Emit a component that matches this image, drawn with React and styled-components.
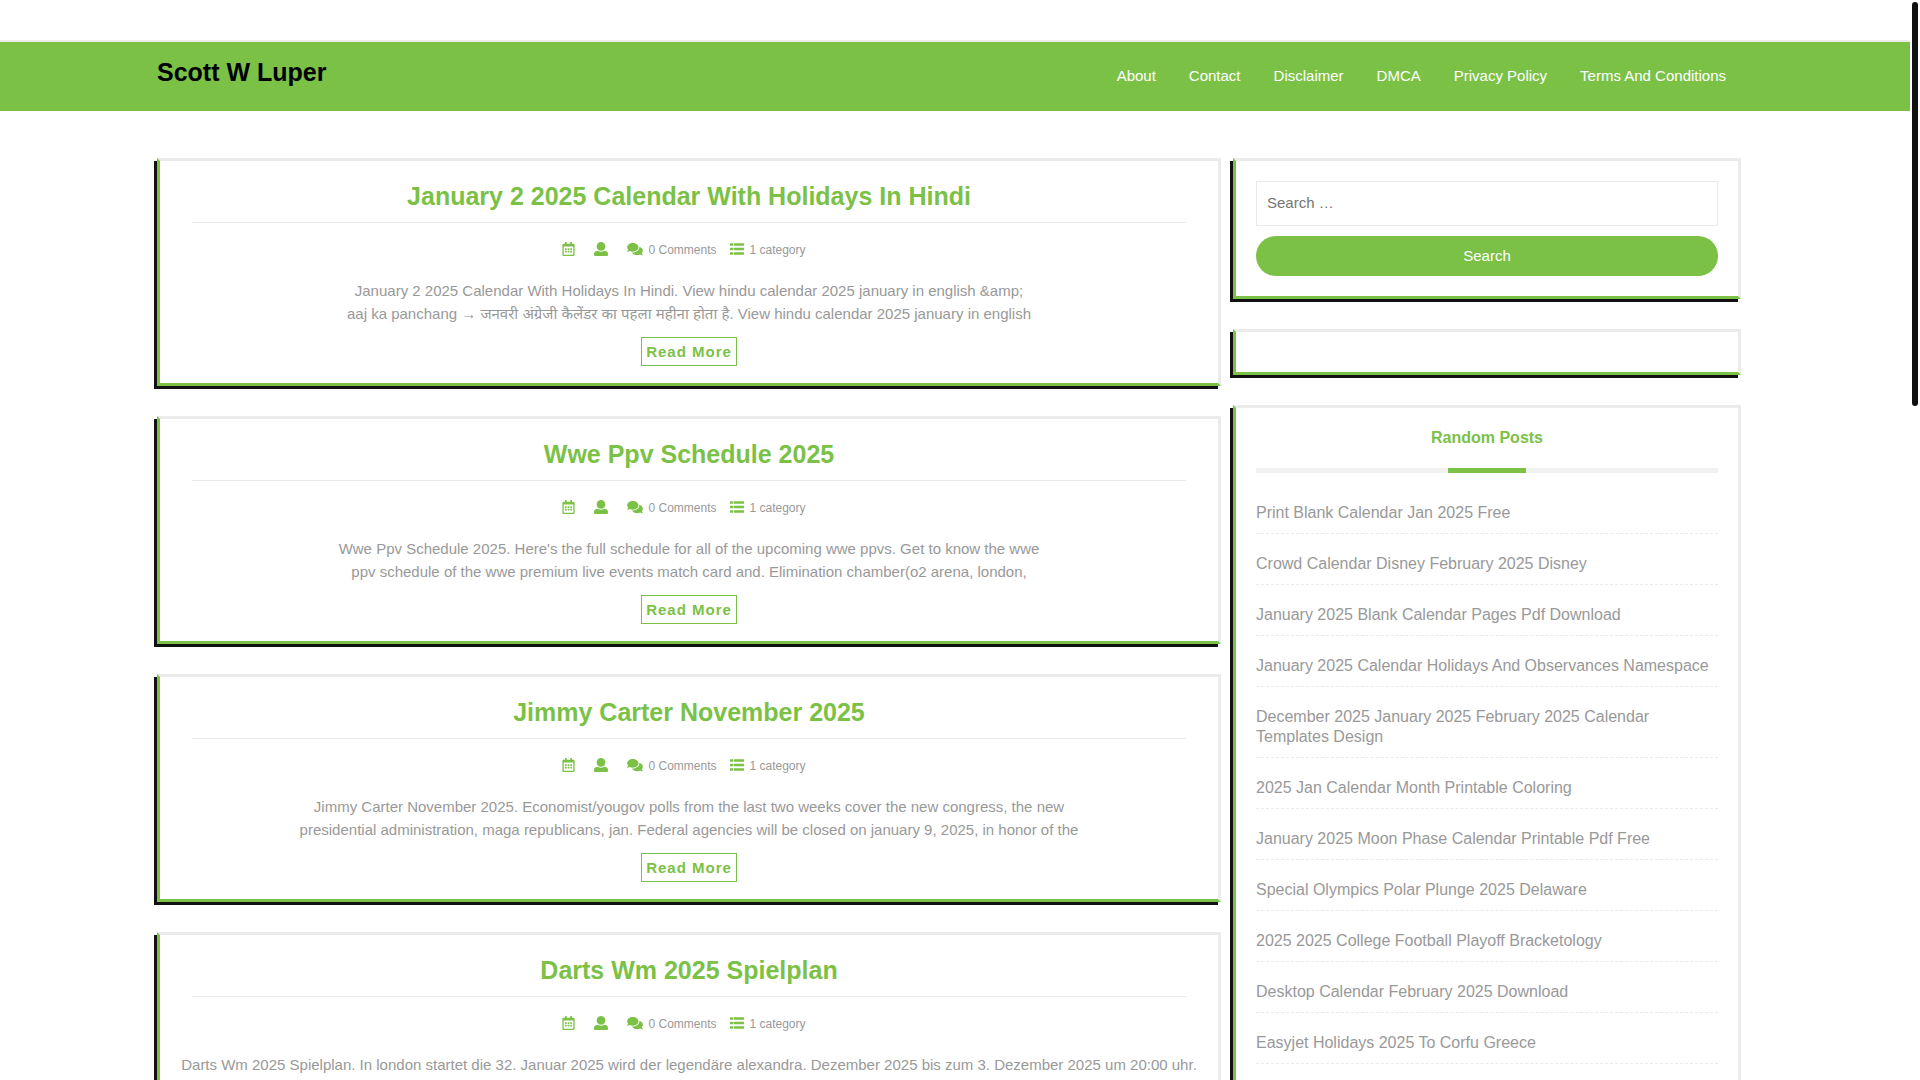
import styled, { createGlobalStyle } from 'styled-components'
import { FaComments, FaRegCalendarAlt } from 'react-icons/fa'

const green = '#7bc146'
const grey = '#ebebeb'

const GlobalStyle = createGlobalStyle`
  * {
    box-sizing: border-box;
  }
  body {
    margin: 0;
    background: #ffffff;
    color: #999999;
    font-family: "Liberation Sans", "Noto Sans", sans-serif;
    font-size: 15px;
  }
  a {
    color: inherit;
    text-decoration: none;
  }
`

const Page = styled.div`
  height: 100vh;
  overflow: hidden;
  padding-right: 10px;
`

const ScrollThumb = styled.div`
  position: fixed;
  top: 2px;
  right: 2px;
  width: 6px;
  height: 404px;
  border-radius: 3px;
  background: #111111;
`

const Header = styled.header`
  margin-top: 40px;
  border-top: 2px solid ${grey};
  background: ${green};
  height: 71px;
  padding: 0 184px 0 157px;
  display: flex;
  justify-content: space-between;
`

const SiteTitle = styled.h1`
  margin: 0;
  padding-top: 16px;
  font-size: 25px;
  line-height: 28px;
  color: #000000;
`

const Nav = styled.nav`
  display: flex;
  gap: 33px;
  padding-top: 22px;
  line-height: 24px;
  color: #ffffff;
`

const Columns = styled.div`
  display: grid;
  grid-template-columns: 1064fr 508fr;
  gap: 12px;
  padding: 47px 169px 0 157px;
`

const Column = styled.div`
  display: flex;
  flex-direction: column;
  gap: 30px;
  min-width: 0;
`

const Box = styled.section`
  border: 3px solid ${grey};
  border-left-color: ${green};
  border-bottom-color: ${green};
  box-shadow: -3px 3px 0 #111111;
  padding: 20px;
  flex-grow: ${props => props.$fill ? 1 : 0};
`

const PostBox = styled(Box).attrs({ as: 'article' })`
  padding: 21px 20px 17px;
  text-align: center;
`

const PostTitle = styled.h2`
  margin: 0 12px 18px;
  padding-bottom: 11px;
  border-bottom: 1px solid ${grey};
  font-size: 25px;
  line-height: 29px;
  color: ${green};
`

const Meta = styled.div`
  display: flex;
  justify-content: center;
  gap: 4px;
  font-size: 12px;
  line-height: 18px;
`

const MetaItem = styled.span`
  display: flex;
  gap: 5px;
  padding-right: 10px;
  svg {
    width: ${props => props.$iconWidth || 14}px;
    height: 14px;
    color: ${green};
    margin-top: 1px;
    flex-shrink: 0;
  }
`

const Excerpt = styled.p`
  margin: 20px 0 12px;
  line-height: 23px;
`

const ReadMore = styled.a`
  display: inline-block;
  vertical-align: top;
  border: 1px solid ${green};
  padding: 5px 4px;
  font-weight: bold;
  line-height: 17px;
  letter-spacing: 1px;
  color: ${green};
`

const SearchForm = styled.form`
  display: flex;
  flex-direction: column;
  gap: 10px;
`

const SearchInput = styled.input`
  width: 100%;
  height: 45px;
  padding: 0 10px 2px;
  border: 1px solid ${grey};
  font: inherit;
  &::placeholder {
    color: #757575;
  }
`

const SearchButton = styled.button`
  height: 40px;
  padding-bottom: 2px;
  border: none;
  border-radius: 20px;
  background: ${green};
  color: #ffffff;
  font: inherit;
  cursor: pointer;
`

const WidgetTitle = styled.h3`
  margin: 0 0 10px;
  font-size: 16px;
  line-height: 20px;
  text-align: center;
  color: ${green};
`

const TitleBar = styled.div`
  height: 5px;
  margin-top: 20px;
  background: linear-gradient(${green}, ${green}) center / 78px 5px no-repeat #f1f1f1;
`

const PostList = styled.ul`
  list-style: none;
  margin: 0;
  padding: 0;
  font-size: 16px;
  line-height: 20px;
`

const PostListItem = styled.li`
  padding: 20px 0 10px;
  border-bottom: 1px dashed ${grey};
`

const UserIcon = () => (
  <svg viewBox='0 0 512 512' fill='currentColor'>
    <path d='M256 0c88.366 0 160 71.634 160 160s-71.634 160-160 160S96 248.366 96 160 167.634 0 256 0zm183.283 333.821l-71.313-17.828c-74.923 53.89-165.738 41.864-223.94 0l-71.313 17.828C29.981 344.505 0 382.903 0 426.955V464c0 26.51 21.49 48 48 48h416c26.51 0 48-21.49 48-48v-37.045c0-44.052-29.981-82.45-72.717-93.134z' />
  </svg>
)

const ListIcon = () => (
  <svg viewBox='0 0 512 512' fill='currentColor'>
    <rect x='0' y='48' width='116' height='88' rx='12' />
    <rect x='0' y='212' width='116' height='88' rx='12' />
    <rect x='0' y='376' width='116' height='88' rx='12' />
    <rect x='140' y='48' width='372' height='88' rx='12' />
    <rect x='140' y='212' width='372' height='88' rx='12' />
    <rect x='140' y='376' width='372' height='88' rx='12' />
  </svg>
)

const links = ['About', 'Contact', 'Disclaimer', 'DMCA', 'Privacy Policy', 'Terms And Conditions']

const posts = [
  {
    title: 'January 2 2025 Calendar With Holidays In Hindi',
    lines: [
      'January 2 2025 Calendar With Holidays In Hindi. View hindu calendar 2025 january in english &amp;',
      'aaj ka panchang → जनवरी अंग्रेजी कैलेंडर का पहला महीना होता है. View hindu calendar 2025 january in english'
    ]
  },
  {
    title: 'Wwe Ppv Schedule 2025',
    lines: [
      "Wwe Ppv Schedule 2025. Here's the full schedule for all of the upcoming wwe ppvs. Get to know the wwe",
      'ppv schedule of the wwe premium live events match card and. Elimination chamber(o2 arena, london,'
    ]
  },
  {
    title: 'Jimmy Carter November 2025',
    lines: [
      'Jimmy Carter November 2025. Economist/yougov polls from the last two weeks cover the new congress, the new',
      'presidential administration, maga republicans, jan. Federal agencies will be closed on january 9, 2025, in honor of the'
    ]
  },
  {
    title: 'Darts Wm 2025 Spielplan',
    lines: [
      'Darts Wm 2025 Spielplan. In london startet die 32. Januar 2025 wird der legendäre alexandra. Dezember 2025 bis zum 3. Dezember 2025 um 20:00 uhr.'
    ]
  }
]

const randomPosts = [
  'Print Blank Calendar Jan 2025 Free',
  'Crowd Calendar Disney February 2025 Disney',
  'January 2025 Blank Calendar Pages Pdf Download',
  'January 2025 Calendar Holidays And Observances Namespace',
  'December 2025 January 2025 February 2025 Calendar Templates Design',
  '2025 Jan Calendar Month Printable Coloring',
  'January 2025 Moon Phase Calendar Printable Pdf Free',
  'Special Olympics Polar Plunge 2025 Delaware',
  '2025 2025 College Football Playoff Bracketology',
  'Desktop Calendar February 2025 Download',
  'Easyjet Holidays 2025 To Corfu Greece'
]

const Post = ({ title, lines }) => (
  <PostBox>
    <PostTitle><a href='#'>{title}</a></PostTitle>
    <Meta>
      <MetaItem $iconWidth={13}><FaRegCalendarAlt /><span /></MetaItem>
      <MetaItem><UserIcon /><span /></MetaItem>
      <MetaItem $iconWidth={16}><FaComments /><span>0 Comments</span></MetaItem>
      <MetaItem><ListIcon /><span>1 category</span></MetaItem>
    </Meta>
    <Excerpt>
      {lines.map((line, i) => (
        <span key={line}>{i > 0 && <br />}{line}</span>
      ))}
    </Excerpt>
    <ReadMore href='#'>Read More</ReadMore>
  </PostBox>
)

const App = () => (
  <Page>
    <GlobalStyle />
    <Header>
      <SiteTitle><a href='#'>Scott W Luper</a></SiteTitle>
      <Nav>
        {links.map(link => <a key={link} href='#'>{link}</a>)}
      </Nav>
    </Header>
    <Columns>
      <Column as='main'>
        {posts.map(post => <Post key={post.title} {...post} />)}
      </Column>
      <Column as='aside'>
        <Box>
          <SearchForm onSubmit={e => e.preventDefault()}>
            <SearchInput type='search' placeholder='Search …' aria-label='Search for' />
            <SearchButton type='submit'>Search</SearchButton>
          </SearchForm>
        </Box>
        <Box />
        <Box $fill>
          <WidgetTitle>
            Random Posts
            <TitleBar />
          </WidgetTitle>
          <PostList>
            {randomPosts.map(post => (
              <PostListItem key={post}><a href='#'>{post}</a></PostListItem>
            ))}
          </PostList>
        </Box>
      </Column>
    </Columns>
    <ScrollThumb />
  </Page>
)

export default App
